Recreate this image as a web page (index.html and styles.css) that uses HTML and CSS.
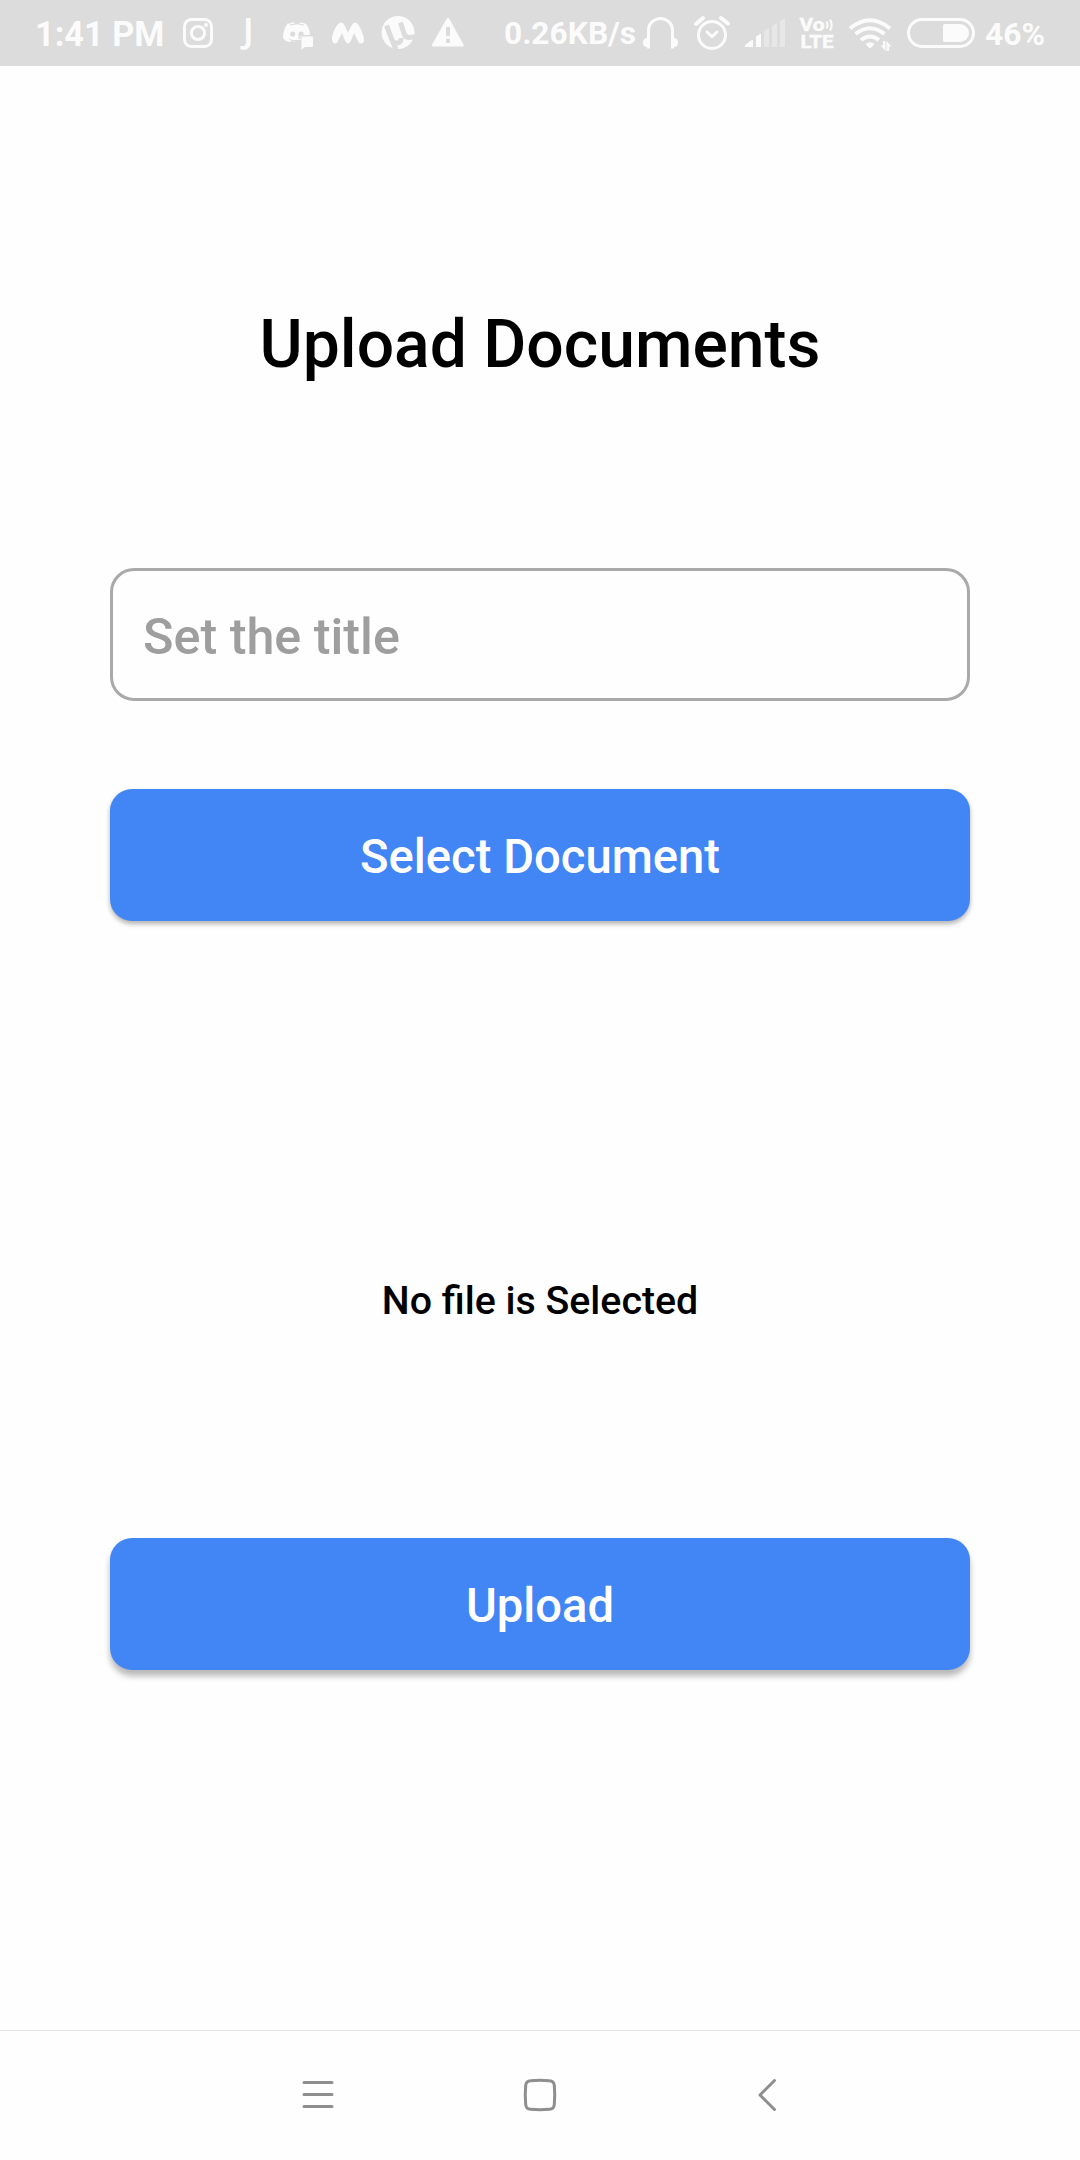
FILE: index.html
```html
<!DOCTYPE html>
<html lang="en">
<head>
<meta charset="utf-8">
<title>Upload Documents</title>
<link rel="stylesheet" href="styles.css">
</head>
<body>
<header class="status">
  <span class="status-text time">1:41 PM</span>
  <svg class="ic instagram" width="32" height="66" viewBox="182 0 32 66"><g class="line"><rect x="184.500" y="19.500" width="27" height="27" rx="7"/><circle cx="198" cy="33" r="6.600"/></g><circle cx="206" cy="25" r="2"/></svg>
  <span class="letter-j">J</span>
  <svg class="ic discord" width="32" height="66" viewBox="282 0 32 66"><path d="M288 24q3-2 6-1.500l1 1.500h4l1-1.500q3-.5 6 1.500 4 5 4 11h-9.500v7h-7l-1-1.500-2.500 1.500q-5-.5-7-4 0-9 5-15z"/><g class="hole"><circle cx="292.700" cy="34" r="2.600"/><path d="M298.500 34a2.600 2.600 0 0 1 5.200 0v1.500H300V39h-1.500z"/><path d="M288 38.500q4 2 10 1.500h3v2q-9 .5-13-3.500z"/></g><path d="M302 36.500h10q1 0 1 1V46q0 1-1 1h-7l-3.500 2.500v-12z"/><path d="M290 25q7-2.500 14 0" class="slit"/></svg>
  <svg class="ic myntra" width="34" height="66" viewBox="331 0 34 66"><path d="M332 39C332 33 337 23 341 22.500C344.500 22.500 346 29 348 32.500C350 29 352 22.500 355.500 22.500C359 23 364 35 364 40C364 44 360 44.500 358.500 42L354 33C352 38 350.500 43.500 348 43.500C345.500 43.500 344 38 342 33L337.500 42C336 44.500 332 44 332 39Z"/></svg>
  <svg class="ic torrent" width="34" height="66" viewBox="381 0 34 66"><circle cx="398" cy="32.500" r="16.500"/><path class="mu" d="M386.500 25.500L392 40q1.500 3.500 5 3 4.500 0 4-5M400.500 22.500l3.500 11q1.500 4 5 4l6.500-.5M393 42l3 8"/></svg>
  <svg class="ic warning" width="34" height="66" viewBox="431 0 34 66"><path d="M446.500 19q1.500-2 3 0l14 25.500q.8 2-1.200 2h-29q-2 0-1.200-2z"/><path class="hole" d="M446 27h4v9h-4zM446 39h4v4h-4z"/></svg>
  <span class="status-text speed">0.26KB/s</span>
  <svg class="ic headphones" width="37" height="66" viewBox="642 0 37 66"><path class="line" d="M648.500 46.500V30a12 11.500 0 0 1 24 0v16.500"/><path d="M647 38h3v10.500h-3V47q-4 0-4-4.500t4-4.500zM674 38h-3v10.500h3V47q4 0 4-4.500t-4-4.500z"/></svg>
  <svg class="ic alarm" width="37" height="66" viewBox="693 0 37 66"><g class="line"><circle cx="712" cy="35" r="13.500"/><path d="M707 32l5 4.700 5-4.700"/><path class="bell" d="M696 24l7-6M721 18l7 5.500"/></g></svg>
  <svg class="ic signal" width="42" height="66" viewBox="744 0 42 66"><path d="M745 47v-2l6-4.500q2-1 2 0V47zM756 47V36.500l4-2.500h1v13z"/><path class="dim" d="M764 47V31l4-2.500h1V47zM772 47V26l4-2.500h1V47zM780 47V21l4-2.500h1V47z"/></svg>
  <svg class="ic volte" width="35" height="66" viewBox="799 0 35 66"><text x="799.500" y="31" textLength="25" lengthAdjust="spacingAndGlyphs">Vo</text><text x="800.500" y="48" textLength="33" lengthAdjust="spacingAndGlyphs">LTE</text><path class="thin" d="M826.500 21.500q2 3.500 0 7M830 19.500q3.500 5.500 0 11"/></svg>
  <svg class="ic wifi" width="45" height="66" viewBox="848 0 45 66"><path class="wave" d="M850 28.500q20-16.500 40 0M855.500 34q14.500-11.500 29 0M861 40q9-7 18 0"/><path d="M865.500 44q4.500-3.500 9 0L871 47.700q-1 .8-2 0z"/><path class="gap" d="M880.500 39h12v12h-12z"/><path d="M883 41h2.500v10L880.500 45.500H883zM889 51h-2.500V41l5 5.500H889z"/></svg>
  <svg class="ic battery" width="70" height="66" viewBox="906 0 70 66"><rect class="line" x="908.500" y="19.500" width="65" height="27" rx="13.500"/><path d="M944.500 24H960a9 9 0 0 1 0 18H944.500q-1.500 0-1.500-1.500v-15q0-1.500 1.500-1.500z"/></svg>
  <span class="status-text percent">46%</span>
</header>
<main class="screen">
  <h1 class="title">Upload Documents</h1>
  <input class="field" type="text" placeholder="Set the title">
  <button class="button select" type="button">Select Document</button>
  <p class="message">No file is Selected</p>
  <button class="button upload" type="button">Upload</button>
</main>
<nav class="navbar">
  <svg width="32" height="36" viewBox="302 2077 32 36"><path d="M304 2082.500h28M304 2094.500h28M304 2106.500h28"/></svg>
  <svg width="36" height="36" viewBox="522 2077 36 36"><path d="M530.500 2080.700Q540 2079.800 549.500 2080.700 554 2081 554.300 2085.500 555.200 2095 554.300 2104.500 554 2109 549.500 2109.300 540 2110.200 530.500 2109.300 526 2109 525.700 2104.500 524.800 2095 525.700 2085.500 526 2081 530.500 2080.700z"/></svg>
  <svg width="22" height="36" viewBox="757 2077 22 36"><path d="M774.500 2080.500L760 2095l14.500 14.500"/></svg>
</nav>
</body>
</html>
```
FILE: styles.css
```css
* { box-sizing: border-box; }

body {
  margin: 0;
  width: 1080px;
  height: 2160px;
  display: flex;
  flex-direction: column;
  background: #fefefe;
  font-family: Roboto, sans-serif;
  font-weight: 500;
  color: #000;
}

.status {
  height: 66px;
  flex: none;
  display: flex;
  align-items: center;
  background: #dcdcdc;
  color: #fbfbfb;
  overflow: hidden;
}
.status > * { flex: none; }
.status-text {
  font-weight: 700;
  font-size: 32px;
  line-height: 66px;
  white-space: nowrap;
}
.time { width: 147px; padding: 2px 0 0 35px; font-size: 34.3px; margin-right: 35px; }
.letter-j {
  width: 12px;
  margin-left: 28px;
  margin-right: 28px;
  padding: 0 0 6px 1px;
  font: 600 34px/60px "Noto Sans", sans-serif;
}
.myntra { margin-left: 17px; }
.torrent { margin-left: 16px; }
.warning { margin-left: 16px; }
.speed { width: 138px; margin-left: 39px; padding-top: 1px; font-size: 31.7px; }
.alarm { margin-left: 14px; }
.signal { margin-left: 14px; }
.volte { margin-left: 13px; }
.wifi { margin-left: 14px; }
.battery { margin-left: 13px; }
.percent { margin-left: 9px; padding-top: 1px; font-size: 31.8px; }

.ic { fill: #fbfbfb; }
.ic .line { fill: none; stroke: #fbfbfb; stroke-width: 3; stroke-linecap: round; stroke-linejoin: round; }
.ic .bell { stroke-width: 4; }
.ic .hole, .ic .gap { fill: #dcdcdc; }
.ic .slit { fill: none; stroke: #dcdcdc; stroke-width: 1; }
.ic .mu { fill: none; stroke: #dcdcdc; stroke-width: 5; }
.ic .dim { fill: #e7e7e7; }
.ic .thin { fill: none; stroke: #fbfbfb; stroke-width: 2; }
.ic .wave { fill: none; stroke: #fbfbfb; stroke-width: 4; }
.volte text { font: 700 18px Roboto, sans-serif; stroke: #fbfbfb; stroke-width: .5; }

.screen {
  flex: 1;
  display: flex;
  flex-direction: column;
  align-items: center;
}
.title {
  margin: 239px 0 0;
  font-size: 66px;
  font-weight: 500;
  line-height: 80px;
}
.field {
  width: 860px;
  height: 133px;
  margin-top: 183px;
  padding: 3px 30px 0;
  border: 3px solid #a9a9a9;
  border-radius: 24px;
  background: transparent;
  font: 500 50.3px Roboto, sans-serif;
}
.field::placeholder { color: #9e9e9e; opacity: 1; }
.button {
  width: 860px;
  height: 132px;
  padding: 3px 0 0;
  border: 0;
  border-radius: 22px;
  background: #4285f4;
  color: #fff;
  font: 500 47.2px Roboto, sans-serif;
}
.select { margin-top: 88px; box-shadow: 0 3px 5px rgba(0, 0, 0, .3); }
.message {
  margin: 356px 0 0;
  font-size: 39.3px;
  line-height: 48px;
}
.upload { margin-top: 213px; box-shadow: 0 6px 6px rgba(0, 0, 0, .28); }

.navbar {
  height: 130px;
  flex: none;
  display: flex;
  align-items: center;
  padding: 0 302px 1px;
  border-top: 1px solid #e3e3e3;
}
.navbar svg { flex: none; fill: none; stroke: #8e8e8e; stroke-width: 3; stroke-linecap: round; stroke-linejoin: round; }
.navbar svg:nth-child(2) { margin-left: 188px; }
.navbar svg:nth-child(3) { margin-left: 199px; }
```
